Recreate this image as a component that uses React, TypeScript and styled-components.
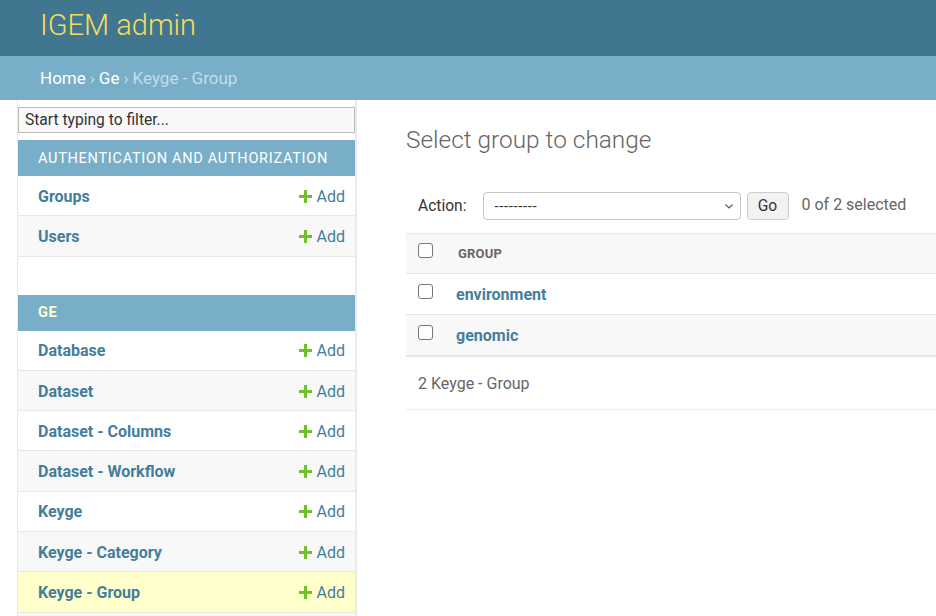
import * as React from 'react';
import styled, { createGlobalStyle } from 'styled-components';

const GlobalStyle = createGlobalStyle`
  html, body {
    margin: 0;
    padding: 0;
    background: #fff;
    font-family: Roboto, "Liberation Sans", Arial, sans-serif;
    color: #333;
  }
  body {
    height: 616px;
    overflow: hidden;
  }
`;

const Header = styled.div`
  height: 56px;
  background: #417690;
  display: flex;
  align-items: center;
  padding: 0 40px;
`;
const Branding = styled.h1`
  margin: 0;
  font-size: 29px;
  font-weight: 300;
  color: #f5dd5d;
  line-height: 1;
  margin-top: -6px;
`;
const Breadcrumbs = styled.div`
  height: 44px;
  background: #79aec8;
  display: flex;
  align-items: center;
  padding: 0 40px;
  font-size: 17px;
  color: #c4dce8;
`;
const Crumb = styled.a`
  color: #fff;
  text-decoration: none;
`;
const Sep = styled.span`
  margin: 0 4px;
  color: #c4dce8;
`;

const Main = styled.div`
  display: flex;
  align-items: flex-start;
`;
const Sidebar = styled.nav`
  margin-left: 17px;
  width: 337px;
  flex-shrink: 0;
  border-left: 1px solid #eaeaea;
  border-right: 2px solid #eaeaea;
  padding-top: 7px;
`;
const Filter = styled.input`
  display: block;
  box-sizing: border-box;
  width: 100%;
  height: 26px;
  margin: 0 0 7px;
  padding: 2px 6px;
  border: 1px solid #bbb;
  background: #f8f8f8;
  font-family: inherit;
  font-size: 15.6px;
  color: #333;
  &::placeholder {
    color: #333;
  }
`;
const Module = styled.div`
  margin-bottom: 38px;
`;
const Caption = styled.div<{ $current?: boolean }>`
  height: 36px;
  background: #79aec8;
  display: flex;
  align-items: center;
  padding: 0 20px;
  font-size: 14.5px;
  letter-spacing: 0.72px;
  text-transform: uppercase;
  color: ${p => (p.$current ? '#ffffcc' : '#fff')};
  font-weight: ${p => (p.$current ? 700 : 400)};
`;
const ModelRow = styled.div<{ $alt?: boolean; $current?: boolean }>`
  box-sizing: border-box;
  height: 40.3px;
  padding: 1px 10px 0 20px;
  border-bottom: 1px solid #e8e8e8;
  display: flex;
  align-items: center;
  justify-content: space-between;
  background: ${p => (p.$current ? '#ffffcc' : p.$alt ? '#f8f8f8' : '#fff')};
`;
const ModelName = styled.a`
  font-size: 16px;
  font-weight: 700;
  color: #447e9b;
  text-decoration: none;
`;
const AddLink = styled.a`
  display: flex;
  align-items: center;
  gap: 5px;
  font-size: 16px;
  color: #447e9b;
  text-decoration: none;
`;

const Content = styled.div`
  flex: 1;
  padding: 0 0 0 49px;
  min-width: 0;
`;
const Title = styled.h1`
  margin: 24px 0 29px;
  font-size: 24.4px;
  font-weight: 300;
  color: #666;
  line-height: 32px;
`;
const Actions = styled.div`
  display: flex;
  align-items: center;
  height: 42px;
  padding: 0 12px;
  margin-bottom: 6px;
  font-size: 15.6px;
  color: #333;
`;
const ActionLabel = styled.span`
  margin-right: 16px;
`;
const Select = styled.div`
  box-sizing: border-box;
  width: 258px;
  height: 28px;
  border: 1px solid #c6c6c6;
  border-radius: 4px;
  display: flex;
  align-items: center;
  justify-content: space-between;
  padding: 0 5px 0 11px;
  font-size: 15px;
  color: #333;
`;
const Dashes = styled.span`
  letter-spacing: 0.6px;
`;
const GoButton = styled.button`
  box-sizing: border-box;
  height: 28px;
  width: 42px;
  margin-left: 6px;
  border: 1px solid #ccc;
  border-radius: 4px;
  background: #f2f2f2;
  font-family: inherit;
  font-size: 15.6px;
  color: #333;
  padding: 0;
`;
const Counter = styled.span`
  margin-left: 13px;
  margin-top: -3px;
  font-size: 16px;
  color: #666;
`;

const Table = styled.div`
  border-top: 1px solid #e8e8e8;
`;
const HeadRow = styled.div`
  height: 39px;
  background: #f8f8f8;
  border-bottom: 1px solid #e8e8e8;
  display: flex;
  align-items: center;
  padding-left: 12px;
`;
const HeadLabel = styled.span`
  margin-left: 25px;
  font-size: 13px;
  font-weight: 700;
  color: #666;
  letter-spacing: 0.2px;
`;
const Row = styled.div<{ $alt?: boolean }>`
  height: 40px;
  display: flex;
  align-items: center;
  padding-left: 12px;
  background: ${p => (p.$alt ? '#f8f8f8' : '#fff')};
  border-bottom: ${p => (p.$alt ? '2px solid #e8e8e8' : '1px solid #e8e8e8')};
`;
const Check = styled.span`
  box-sizing: border-box;
  width: 15px;
  height: 15px;
  border: 1px solid #777;
  border-radius: 3px;
  background: #fff;
  margin-top: -6px;
`;
const RowLink = styled.a`
  margin-left: 23px;
  font-size: 16px;
  font-weight: 700;
  color: #447e9b;
  text-decoration: none;
`;
const Paginator = styled.div`
  height: 52px;
  display: flex;
  align-items: center;
  padding-left: 12px;
  border-bottom: 1px solid #eee;
  font-size: 16px;
  color: #666;
`;

const Plus = () => (
  <svg width="13" height="13" viewBox="0 0 13 13">
    <path d="M5 0h3v5h5v3H8v5H5V8H0V5h5z" fill="#70bf2b" />
  </svg>
);

const Chevron = () => (
  <svg width="12" height="12" viewBox="0 0 12 12">
    <path d="M2.5 4.5L6 8l3.5-3.5" fill="none" stroke="#555" strokeWidth="1.1" />
  </svg>
);

const authModels = ['Groups', 'Users'];
const geModels = ['Database', 'Dataset', 'Dataset - Columns', 'Dataset - Workflow', 'Keyge', 'Keyge - Category', 'Keyge - Group'];

export default function App() {
  return (
    <>
      <GlobalStyle />
      <Header>
        <Branding>IGEM admin</Branding>
      </Header>
      <Breadcrumbs>
        <Crumb>Home</Crumb>
        <Sep>›</Sep>
        <Crumb>Ge</Crumb>
        <Sep>›</Sep>
        <span>Keyge - Group</span>
      </Breadcrumbs>
      <Main>
        <Sidebar>
          <Filter placeholder="Start typing to filter..." />
          <Module>
            <Caption>Authentication and Authorization</Caption>
            {authModels.map((m, i) => (
              <ModelRow key={m} $alt={i % 2 === 1}>
                <ModelName>{m}</ModelName>
                <AddLink><Plus />Add</AddLink>
              </ModelRow>
            ))}
          </Module>
          <Module>
            <Caption $current>Ge</Caption>
            {geModels.map((m, i) => (
              <ModelRow key={m} $alt={i % 2 === 1} $current={m === 'Keyge - Group'}>
                <ModelName>{m}</ModelName>
                <AddLink><Plus />Add</AddLink>
              </ModelRow>
            ))}
            <ModelRow $alt />
          </Module>
        </Sidebar>
        <Content>
          <Title>Select group to change</Title>
          <Actions>
            <ActionLabel>Action:</ActionLabel>
            <Select>
              <Dashes>---------</Dashes>
              <Chevron />
            </Select>
            <GoButton>Go</GoButton>
            <Counter>0 of 2 selected</Counter>
          </Actions>
          <Table>
            <HeadRow>
              <Check />
              <HeadLabel>GROUP</HeadLabel>
            </HeadRow>
            <Row>
              <Check />
              <RowLink>environment</RowLink>
            </Row>
            <Row $alt>
              <Check />
              <RowLink>genomic</RowLink>
            </Row>
          </Table>
          <Paginator>2 Keyge - Group</Paginator>
        </Content>
      </Main>
    </>
  );
}
